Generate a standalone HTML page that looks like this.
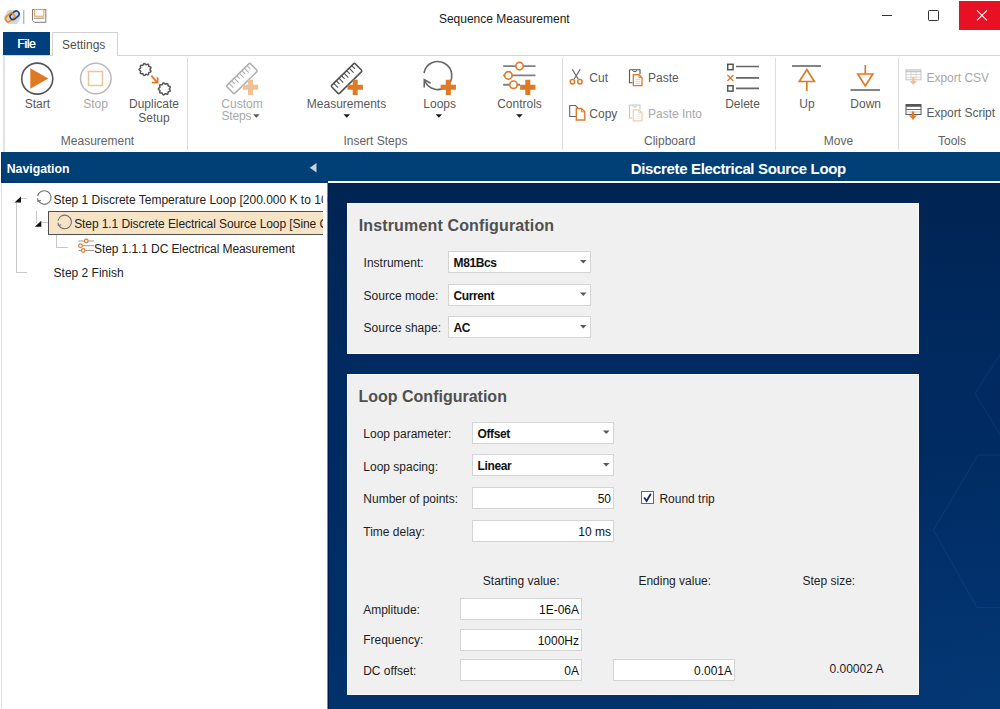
<!DOCTYPE html>
<html><head><meta charset="utf-8"><title>Sequence Measurement</title>
<style>
html,body{margin:0;padding:0;}
body{width:1000px;height:709px;position:relative;overflow:hidden;background:#fff;font-family:"Liberation Sans", sans-serif;}
.t{position:absolute;white-space:nowrap;font-family:"Liberation Sans", sans-serif;}
</style></head><body>
<div class="t" style="left:438.9px;top:12.64px;font-size:12px;line-height:12px;color:#1a1a1a;">Sequence Measurement</div>
<div style="position:absolute;left:3px;top:55px;width:997px;height:1px;background:#d6d6d6;"></div>
<div style="position:absolute;left:3px;top:32px;width:47px;height:23px;background:#003f7e;"></div>
<div class="t" style="left:17.3px;top:38.44px;font-size:12px;line-height:12px;color:#fff;letter-spacing:-0.3px;text-shadow:0.3px 0 0 #fff;">File</div>
<div style="position:absolute;left:52px;top:32px;width:66px;height:24px;background:#fff;border:1px solid #d2d2d2;border-bottom:none;box-sizing:border-box;"></div>
<div class="t" style="left:62px;top:38.84px;font-size:12px;line-height:12px;color:#505050;">Settings</div>
<div style="position:absolute;left:3px;top:56px;width:2px;height:96px;background:#e2e2e2;"></div>
<div style="position:absolute;left:187px;top:58px;width:1px;height:92px;background:#dcdcdc;"></div>
<div style="position:absolute;left:562px;top:58px;width:1px;height:92px;background:#dcdcdc;"></div>
<div style="position:absolute;left:775px;top:58px;width:1px;height:92px;background:#dcdcdc;"></div>
<div style="position:absolute;left:898px;top:58px;width:1px;height:92px;background:#dcdcdc;"></div>
<div class="t" style="left:97.5px;top:135.24px;transform:translateX(-50%);font-size:12px;line-height:12px;color:#636363;">Measurement</div>
<div class="t" style="left:375.4px;top:135.24px;transform:translateX(-50%);font-size:12px;line-height:12px;color:#636363;">Insert Steps</div>
<div class="t" style="left:669.7px;top:135.24px;transform:translateX(-50%);font-size:12px;line-height:12px;color:#636363;">Clipboard</div>
<div class="t" style="left:838.4px;top:135.24px;transform:translateX(-50%);font-size:12px;line-height:12px;color:#636363;">Move</div>
<div class="t" style="left:952px;top:135.24px;transform:translateX(-50%);font-size:12px;line-height:12px;color:#636363;">Tools</div>
<div class="t" style="left:37.3px;top:97.84px;transform:translateX(-50%);font-size:12px;line-height:12px;color:#595959;">Start</div>
<div class="t" style="left:95.5px;top:97.84px;transform:translateX(-50%);font-size:12px;line-height:12px;color:#a8a8a8;">Stop</div>
<div class="t" style="left:154px;top:97.84px;transform:translateX(-50%);font-size:12px;line-height:12px;color:#595959;">Duplicate</div>
<div class="t" style="left:154px;top:111.54px;transform:translateX(-50%);font-size:12px;line-height:12px;color:#595959;">Setup</div>
<div class="t" style="left:242px;top:97.84px;transform:translateX(-50%);font-size:12px;line-height:12px;color:#a8a8a8;">Custom</div>
<div class="t" style="left:221.5px;top:110.04px;font-size:12px;line-height:12px;color:#a8a8a8;letter-spacing:-0.2px;">Steps</div>
<div class="t" style="left:346.5px;top:97.84px;transform:translateX(-50%);font-size:12px;line-height:12px;color:#595959;">Measurements</div>
<div class="t" style="left:439.7px;top:97.84px;transform:translateX(-50%);font-size:12px;line-height:12px;color:#595959;">Loops</div>
<div class="t" style="left:519.5px;top:97.84px;transform:translateX(-50%);font-size:12px;line-height:12px;color:#595959;">Controls</div>
<div class="t" style="left:589.3px;top:72.44px;font-size:12px;line-height:12px;color:#595959;">Cut</div>
<div class="t" style="left:648px;top:72.44px;font-size:12px;line-height:12px;color:#595959;">Paste</div>
<div class="t" style="left:589.3px;top:107.64px;font-size:12px;line-height:12px;color:#595959;">Copy</div>
<div class="t" style="left:648px;top:107.64px;font-size:12px;line-height:12px;color:#a8a8a8;">Paste Into</div>
<div class="t" style="left:742.5px;top:97.84px;transform:translateX(-50%);font-size:12px;line-height:12px;color:#595959;">Delete</div>
<div class="t" style="left:807px;top:97.84px;transform:translateX(-50%);font-size:12px;line-height:12px;color:#595959;">Up</div>
<div class="t" style="left:865.7px;top:97.84px;transform:translateX(-50%);font-size:12px;line-height:12px;color:#595959;">Down</div>
<div class="t" style="left:926.4px;top:72.44px;font-size:12px;line-height:12px;color:#a8a8a8;">Export CSV</div>
<div class="t" style="left:926.4px;top:107.04px;font-size:12px;line-height:12px;color:#595959;">Export Script</div>
<div style="position:absolute;left:1px;top:152px;width:327px;height:31px;background:#004077;"></div>
<div style="position:absolute;left:1px;top:152px;width:1px;height:31px;background:#003466;"></div>
<div style="position:absolute;left:1px;top:181px;width:327px;height:2px;background:#00386c;"></div>
<div class="t" style="left:6.7px;top:162.69px;font-size:12.3px;line-height:12.3px;color:#fff;font-weight:700;">Navigation</div>
<div style="position:absolute;left:0px;top:183px;width:327px;height:526px;background:#fff;"></div>
<div style="position:absolute;left:1px;top:183px;width:1px;height:526px;background:#e0e0e0;"></div>
<div style="position:absolute;left:328px;top:152px;width:672px;height:29px;background:#004077;"></div>
<div style="position:absolute;left:328px;top:181px;width:672px;height:2px;background:#ffffff;"></div>
<div class="t" style="left:738.3px;top:160.70px;transform:translateX(-50%);font-size:15px;line-height:15px;color:#fff;font-weight:700;letter-spacing:-0.35px;">Discrete Electrical Source Loop</div>
<div style="position:absolute;left:327px;top:183px;width:673px;height:526px;background:radial-gradient(ellipse 380px 260px at 100% 100%, rgba(12,70,140,0.3), rgba(12,70,140,0) 100%),linear-gradient(180deg,#002452 0%,#002a60 35%,#002d65 70%,#00326b 100%);"></div>
<div style="position:absolute;left:327px;top:183px;width:1px;height:526px;background:#7c8aa2;"></div>
<div style="position:absolute;left:328px;top:183px;width:1px;height:526px;background:#001b4e;"></div>
<div style="position:absolute;left:21px;top:198px;width:6px;height:1px;background:#c8c8c8;"></div>
<div style="position:absolute;left:16px;top:203px;width:1px;height:70px;background:#c8c8c8;"></div>
<div style="position:absolute;left:16px;top:272px;width:11px;height:1px;background:#c8c8c8;"></div>
<div class="t" style="left:53.6px;top:193.84px;font-size:12px;line-height:12px;color:#222;">Step 1 Discrete Temperature Loop [200.000 K to 10</div>
<div style="position:absolute;left:36px;top:211px;width:1px;height:12px;background:#c8c8c8;"></div>
<div style="position:absolute;left:42px;top:222px;width:6px;height:1px;background:#c8c8c8;"></div>
<div style="position:absolute;left:48px;top:211px;width:276px;height:24px;background:#f7e4c6;border-top:1px solid #505050;border-bottom:1px solid #505050;border-left:1px solid #505050;box-sizing:border-box;"></div>
<div style="position:absolute;left:48px;top:205px;width:275px;height:30px;overflow:hidden">
<div class="t" style="left:26.2px;top:12.74px;font-size:12px;line-height:12px;color:#222;letter-spacing:-0.09px;">Step 1.1 Discrete Electrical Source Loop [Sine Cu</div>
</div>
<div style="position:absolute;left:56px;top:235px;width:1px;height:13px;background:#c8c8c8;"></div>
<div style="position:absolute;left:56px;top:247px;width:12px;height:1px;background:#c8c8c8;"></div>
<div class="t" style="left:94px;top:242.54px;font-size:12px;line-height:12px;color:#222;letter-spacing:-0.09px;">Step 1.1.1 DC Electrical Measurement</div>
<div class="t" style="left:53.6px;top:266.54px;font-size:12px;line-height:12px;color:#222;">Step 2 Finish</div>
<div style="position:absolute;left:323px;top:183px;width:4px;height:100px;background:#fff;"></div>
<div style="position:absolute;left:347px;top:203px;width:572px;height:151px;background:#f0f0f0;border:1px solid #fbfbfb;box-sizing:border-box;"></div>
<div style="position:absolute;left:347px;top:374px;width:572px;height:321px;background:#f0f0f0;border:1px solid #fbfbfb;box-sizing:border-box;"></div>
<div class="t" style="left:358.7px;top:217.96px;font-size:16px;line-height:16px;color:#505050;font-weight:700;letter-spacing:0.15px;">Instrument Configuration</div>
<div class="t" style="left:358.5px;top:388.66px;font-size:16px;line-height:16px;color:#505050;font-weight:700;">Loop Configuration</div>
<div class="t" style="left:363.6px;top:257.04px;font-size:12px;line-height:12px;color:#1e1e1e;">Instrument:</div>
<div class="t" style="left:363.6px;top:289.54px;font-size:12px;line-height:12px;color:#1e1e1e;">Source mode:</div>
<div class="t" style="left:363.6px;top:322.04px;font-size:12px;line-height:12px;color:#1e1e1e;">Source shape:</div>
<div style="position:absolute;left:448px;top:251px;width:143px;height:22px;background:#fff;border:1px solid #d4d4d4;box-sizing:border-box;"></div>
<div class="t" style="left:453.6px;top:257.04px;font-size:12px;line-height:12px;color:#111;font-weight:700;letter-spacing:-0.4px;">M81Bcs</div>
<div style="position:absolute;left:448px;top:283.5px;width:143px;height:22px;background:#fff;border:1px solid #d4d4d4;box-sizing:border-box;"></div>
<div class="t" style="left:453.6px;top:289.54px;font-size:12px;line-height:12px;color:#111;font-weight:700;letter-spacing:-0.4px;">Current</div>
<div style="position:absolute;left:448px;top:316px;width:143px;height:22px;background:#fff;border:1px solid #d4d4d4;box-sizing:border-box;"></div>
<div class="t" style="left:453.6px;top:322.04px;font-size:12px;line-height:12px;color:#111;font-weight:700;letter-spacing:-0.4px;">AC</div>
<div class="t" style="left:363.3px;top:428.04px;font-size:12px;line-height:12px;color:#1e1e1e;">Loop parameter:</div>
<div class="t" style="left:363.3px;top:460.54px;font-size:12px;line-height:12px;color:#1e1e1e;">Loop spacing:</div>
<div class="t" style="left:363.3px;top:493.04px;font-size:12px;line-height:12px;color:#1e1e1e;">Number of points:</div>
<div class="t" style="left:363.3px;top:525.54px;font-size:12px;line-height:12px;color:#1e1e1e;">Time delay:</div>
<div style="position:absolute;left:472px;top:421.5px;width:142px;height:22px;background:#fff;border:1px solid #d4d4d4;box-sizing:border-box;"></div>
<div class="t" style="left:477.6px;top:427.54px;font-size:12px;line-height:12px;color:#111;font-weight:700;letter-spacing:-0.4px;">Offset</div>
<div style="position:absolute;left:472px;top:454px;width:142px;height:22px;background:#fff;border:1px solid #d4d4d4;box-sizing:border-box;"></div>
<div class="t" style="left:477.6px;top:460.04px;font-size:12px;line-height:12px;color:#111;font-weight:700;letter-spacing:-0.4px;">Linear</div>
<div style="position:absolute;left:472px;top:487px;width:142px;height:22px;background:#fff;border:1px solid #d4d4d4;box-sizing:border-box;"></div>
<div class="t" style="right:389px;top:493.04px;font-size:12px;line-height:12px;color:#111;">50</div>
<div style="position:absolute;left:472px;top:519.5px;width:142px;height:22px;background:#fff;border:1px solid #d4d4d4;box-sizing:border-box;"></div>
<div class="t" style="right:389px;top:525.54px;font-size:12px;line-height:12px;color:#111;">10 ms</div>
<div style="position:absolute;left:641px;top:491px;width:13px;height:13px;background:#fff;border:1px solid #6a6a6a;box-sizing:border-box;"></div>
<div class="t" style="left:659.4px;top:493.04px;font-size:12px;line-height:12px;color:#1e1e1e;">Round trip</div>
<div class="t" style="left:482.8px;top:575.24px;font-size:12px;line-height:12px;color:#1e1e1e;">Starting value:</div>
<div class="t" style="left:638.4px;top:575.24px;font-size:12px;line-height:12px;color:#1e1e1e;">Ending value:</div>
<div class="t" style="left:802.5px;top:575.24px;font-size:12px;line-height:12px;color:#1e1e1e;">Step size:</div>
<div class="t" style="left:363.2px;top:604.04px;font-size:12px;line-height:12px;color:#1e1e1e;">Amplitude:</div>
<div class="t" style="left:363.2px;top:634.34px;font-size:12px;line-height:12px;color:#1e1e1e;">Frequency:</div>
<div class="t" style="left:363.2px;top:665.34px;font-size:12px;line-height:12px;color:#1e1e1e;">DC offset:</div>
<div style="position:absolute;left:460px;top:598px;width:122px;height:22px;background:#fff;border:1px solid #d4d4d4;box-sizing:border-box;"></div>
<div class="t" style="right:421px;top:604.04px;font-size:12px;line-height:12px;color:#111;">1E-06A</div>
<div style="position:absolute;left:460px;top:628.5px;width:122px;height:22px;background:#fff;border:1px solid #d4d4d4;box-sizing:border-box;"></div>
<div class="t" style="right:421px;top:634.54px;font-size:12px;line-height:12px;color:#111;">1000Hz</div>
<div style="position:absolute;left:460px;top:659px;width:122px;height:22px;background:#fff;border:1px solid #d4d4d4;box-sizing:border-box;"></div>
<div class="t" style="right:421px;top:665.04px;font-size:12px;line-height:12px;color:#111;">0A</div>
<div style="position:absolute;left:613px;top:659px;width:122px;height:22px;background:#fff;border:1px solid #d4d4d4;box-sizing:border-box;"></div>
<div class="t" style="right:268px;top:665.04px;font-size:12px;line-height:12px;color:#111;">0.001A</div>
<div class="t" style="left:829.5px;top:663.24px;font-size:12px;line-height:12px;color:#1e1e1e;">0.00002 A</div>
<svg style="position:absolute;left:0;top:0;pointer-events:none" width="1000" height="709" viewBox="0 0 1000 709">
<polygon points="8,10 17,10 21,17 17,24 8,24 4,17" fill="#d6d6d6"/>
<g transform="translate(10 17.4) rotate(-40)"><rect x="-5" y="-2.9" width="10" height="5.8" rx="2.9" fill="none" stroke="#ef8a1e" stroke-width="1.6"/></g>
<g transform="translate(14.6 15.2) rotate(-40)"><rect x="-5" y="-2.9" width="10" height="5.8" rx="2.9" fill="none" stroke="#0d4a8a" stroke-width="1.6"/></g>
<g transform="translate(10 17.4) rotate(-40)"><path d="M2.1 -2.9 A2.9 2.9 0 0 1 5 0" fill="none" stroke="#ef8a1e" stroke-width="1.6"/></g>
<path d="M23.8 10 V24" stroke="#9a9a9a" stroke-width="1"/>
<path d="M32.5 9.5 H45.8 V22.3 H34.5 L32.5 20.3 Z" fill="#fff" stroke="#7a7a7a" stroke-width="1"/>
<rect x="34.6" y="9.6" width="9.2" height="6.6" fill="#fff" stroke="#e8a456" stroke-width="1.1"/>
<path d="M34 18.2 H44.3" stroke="#9aa0a8" stroke-width="1.3"/>
<path d="M882 15.5 H892" stroke="#333" stroke-width="1"/>
<rect x="928.5" y="10.5" width="10" height="10" fill="none" stroke="#333" stroke-width="1" rx="0.8"/>
<rect x="959" y="1" width="41" height="29" fill="#e81123"/>
<path d="M977 10.3 L987 20.3 M987 10.3 L977 20.3" stroke="#fff" stroke-width="1.1"/>
<circle cx="37.25" cy="78.65" r="15.5" fill="none" stroke="#555" stroke-width="1.6"/>
<polygon points="30.3,68.3 48.3,78.6 30.3,88.8" fill="#df7a24"/>
<circle cx="95.8" cy="78.5" r="15.3" fill="none" stroke="#b9b9b9" stroke-width="1.5"/>
<rect x="88.5" y="71.5" width="14" height="14" fill="none" stroke="#f0c297" stroke-width="1.5"/>
<polygon points="150.00,69.50 150.17,69.93 150.57,70.45 150.91,71.03 150.93,71.59 150.56,72.00 149.92,72.22 149.29,72.36 148.88,72.59 148.73,73.03 148.70,73.67 148.59,74.34 148.25,74.78 147.70,74.86 147.06,74.62 146.49,74.32 146.03,74.23 145.63,74.47 145.20,74.95 144.68,75.39 144.14,75.51 143.67,75.21 143.34,74.62 143.09,74.02 142.80,73.66 142.34,73.59 141.70,73.67 141.02,73.68 140.53,73.42 140.36,72.89 140.48,72.23 140.68,71.61 140.69,71.14 140.38,70.79 139.83,70.45 139.31,70.02 139.10,69.50 139.31,68.98 139.83,68.55 140.38,68.21 140.69,67.86 140.68,67.39 140.48,66.78 140.36,66.11 140.53,65.58 141.02,65.32 141.70,65.33 142.34,65.41 142.80,65.34 143.09,64.98 143.34,64.38 143.67,63.79 144.14,63.49 144.68,63.61 145.20,64.05 145.63,64.53 146.03,64.77 146.49,64.68 147.06,64.38 147.70,64.14 148.25,64.22 148.59,64.66 148.70,65.33 148.73,65.97 148.88,66.41 149.29,66.64 149.92,66.78 150.56,67.00 150.93,67.41 150.91,67.97 150.57,68.55 150.17,69.07" fill="none" stroke="#555" stroke-width="1.5" stroke-linejoin="round"/>
<polygon points="169.30,88.90 169.47,89.33 169.87,89.85 170.21,90.43 170.23,90.99 169.86,91.40 169.22,91.62 168.59,91.76 168.18,91.99 168.03,92.43 168.00,93.07 167.89,93.74 167.55,94.18 167.00,94.26 166.36,94.02 165.79,93.72 165.33,93.63 164.93,93.87 164.50,94.35 163.98,94.79 163.44,94.91 162.97,94.61 162.64,94.02 162.39,93.42 162.10,93.06 161.64,92.99 161.00,93.07 160.32,93.08 159.83,92.82 159.66,92.29 159.78,91.63 159.98,91.01 159.99,90.54 159.68,90.19 159.13,89.85 158.61,89.42 158.40,88.90 158.61,88.38 159.13,87.95 159.68,87.61 159.99,87.26 159.98,86.79 159.78,86.18 159.66,85.51 159.83,84.98 160.32,84.72 161.00,84.73 161.64,84.81 162.10,84.74 162.39,84.38 162.64,83.78 162.97,83.19 163.44,82.89 163.98,83.01 164.50,83.45 164.93,83.93 165.33,84.17 165.79,84.08 166.36,83.78 167.00,83.54 167.55,83.62 167.89,84.06 168.00,84.73 168.03,85.37 168.18,85.81 168.59,86.04 169.22,86.18 169.86,86.40 170.23,86.81 170.21,87.37 169.87,87.95 169.47,88.47" fill="none" stroke="#555" stroke-width="1.5" stroke-linejoin="round"/>
<path d="M151.3 75.6 L157.4 82.6" stroke="#df7a24" stroke-width="1.8"/>
<path d="M151.8 82.6 H157.6 V77.3" fill="none" stroke="#df7a24" stroke-width="1.8"/>
<g transform="translate(241.9 78.5) rotate(-44.5)"><rect x="-16.5" y="-5.6" width="33" height="11.2" rx="1.3" fill="#fff" stroke="#b0b0b0" stroke-width="1.5"/><path d="M-12.50 -5.6 v6.2 M-8.90 -5.6 v4.6 M-5.30 -5.6 v6.2 M-1.70 -5.6 v4.6 M1.90 -5.6 v6.2 M5.50 -5.6 v4.6 M9.10 -5.6 v6.2 M12.70 -5.6 v4.6 " stroke="#b0b0b0" stroke-width="1.1"/></g>
<path d="M242.85 87.30 H258.15 M250.50 79.65 V94.95" stroke="#efc195" stroke-width="5"/>
<polygon points="253.2,114.3 259.7,114.3 256.45,117.8" fill="#5a5a5a"/>
<g transform="translate(346.6 78.5) rotate(-44.5)"><rect x="-16.5" y="-5.6" width="33" height="11.2" rx="1.3" fill="#fff" stroke="#505050" stroke-width="1.5"/><path d="M-12.50 -5.6 v6.2 M-8.90 -5.6 v4.6 M-5.30 -5.6 v6.2 M-1.70 -5.6 v4.6 M1.90 -5.6 v6.2 M5.50 -5.6 v4.6 M9.10 -5.6 v6.2 M12.70 -5.6 v4.6 " stroke="#505050" stroke-width="1.1"/></g>
<path d="M347.55 87.30 H362.85 M355.20 79.65 V94.95" stroke="#df7a24" stroke-width="5"/>
<polygon points="343.5,114.3 350.0,114.3 346.75,117.8" fill="#1a1a1a"/>
<path d="M424.6 80.3 A14 14 0 1 0 424.0 73.0" fill="none" stroke="#676767" stroke-width="1.6"/>
<path d="M424.2 87.4 L424.3 79.6 L430.6 83.3" fill="none" stroke="#676767" stroke-width="1.6"/>
<path d="M440.65 87.35 H455.95 M448.30 79.70 V95.00" stroke="#df7a24" stroke-width="5"/>
<polygon points="435.6,114.3 442.1,114.3 438.85,117.8" fill="#1a1a1a"/>
<path d="M503.2 66.1 H535.5 M503.2 75.4 H535.5 M503.2 84.7 H520" stroke="#808080" stroke-width="1.9"/>
<circle cx="519.5" cy="66.1" r="3.7" fill="#fff" stroke="#df7a24" stroke-width="1.7"/>
<circle cx="508.4" cy="75.4" r="3.7" fill="#fff" stroke="#df7a24" stroke-width="1.7"/>
<circle cx="513.5" cy="84.7" r="3.7" fill="#fff" stroke="#df7a24" stroke-width="1.7"/>
<path d="M520.15 87.35 H535.45 M527.80 79.70 V95.00" stroke="#df7a24" stroke-width="5"/>
<polygon points="516.2,114.3 522.7,114.3 519.45,117.8" fill="#1a1a1a"/>
<path d="M572.2 69.3 L578.3 79.3 M580.2 69.3 L574.1 79.3" stroke="#666" stroke-width="1.2"/>
<circle cx="572.4" cy="81.8" r="2.2" fill="#fff" stroke="#df7a24" stroke-width="1.5"/>
<circle cx="579.9" cy="81.8" r="2.2" fill="#fff" stroke="#df7a24" stroke-width="1.5"/>
<path d="M629.5 69.8 H640 V74.3 M632.5 82.8 H629.5 V69.8" fill="none" stroke="#555" stroke-width="1.1"/>
<path d="M632.5 70.1 L633.5 71.6 H636 L637 70.1" fill="none" stroke="#555" stroke-width="1"/>
<path d="M633.3 74.6 H639 L642 77.6 V85.6 H633.3 Z" fill="#fff" stroke="#df7a24" stroke-width="1.3"/>
<path d="M639 74.6 V77.6 H642" fill="none" stroke="#df7a24" stroke-width="0.9"/>
<path d="M635.3 79.3 H640 M635.3 81.3 H640 M635.3 83.3 H640" stroke="#d8c4b0" stroke-width="0.8"/>
<path d="M569.7 105.5 H575.5 L577.5 107.5 V116.5 H569.7 Z" fill="#fff" stroke="#666" stroke-width="1.1"/>
<path d="M576.3 108.5 H581.5 L584.8 111.8 V120 H576.3 Z" fill="#fff" stroke="#df7a24" stroke-width="1.4"/>
<path d="M581.5 108.5 V111.8 H584.8" fill="none" stroke="#df7a24" stroke-width="0.9"/>
<path d="M629.5 105.0 H640 V109.5 M632.5 118.0 H629.5 V105.0" fill="none" stroke="#c6c6c6" stroke-width="1.1"/>
<path d="M632.5 105.3 L633.5 106.8 H636 L637 105.3" fill="none" stroke="#c6c6c6" stroke-width="1"/>
<path d="M633.3 109.8 H639 L642 112.8 V120.8 H633.3 Z" fill="#fff" stroke="#f3cfac" stroke-width="1.3"/>
<path d="M639 109.8 V112.8 H642" fill="none" stroke="#f3cfac" stroke-width="0.9"/>
<path d="M635.3 114.5 H640 M635.3 116.5 H640 M635.3 118.5 H640" stroke="#eee" stroke-width="0.8"/>
<rect x="727.7" y="64.3" width="5.4" height="5.4" fill="none" stroke="#555" stroke-width="1.5"/>
<rect x="727.7" y="85.7" width="5.4" height="5.4" fill="none" stroke="#555" stroke-width="1.5"/>
<path d="M727.4 75 L733.4 81 M733.4 75 L727.4 81" stroke="#df7a24" stroke-width="1.3"/>
<path d="M736 66.5 H759 M736 77.8 H759 M736 88.3 H759" stroke="#666" stroke-width="1.7"/>
<path d="M792 66 H821" stroke="#666" stroke-width="1.6"/>
<polygon points="806.8,69.5 814.3,81.5 799.3,81.5" fill="none" stroke="#df7a24" stroke-width="1.7" stroke-linejoin="miter"/>
<path d="M806.8 81.5 V91" stroke="#df7a24" stroke-width="1.7"/>
<path d="M850.5 90 H880" stroke="#666" stroke-width="1.6"/>
<polygon points="865.3,86 872.8,74 857.8,74" fill="none" stroke="#df7a24" stroke-width="1.7"/>
<path d="M865.3 65 V74" stroke="#df7a24" stroke-width="1.7"/>
<rect x="906" y="69.8" width="15" height="10" fill="#fff" stroke="#c4c4c4" stroke-width="1"/>
<path d="M906 71.5 H921" stroke="#c4c4c4" stroke-width="1.6"/>
<path d="M906 74.5 H921 M906 77.3 H921 M911 70 V80 M916 70 V80" stroke="#cfcfcf" stroke-width="0.8"/>
<path d="M913.3 77 V82" stroke="#f1c08e" stroke-width="2.2"/><polygon points="909.6,81 917,81 913.3,85" fill="#f1c08e"/>
<rect x="906" y="104.5" width="15" height="10" fill="#fff" stroke="#555" stroke-width="1"/>
<path d="M906 105.8 H921" stroke="#555" stroke-width="2"/>
<path d="M906 109.5 H921" stroke="#666" stroke-width="1"/>
<path d="M906 112 H921" stroke="#bbb" stroke-width="0.8"/>
<path d="M913 111.5 V116.5" stroke="#df7a24" stroke-width="2.4"/><polygon points="909,115.5 917,115.5 913,120" fill="#df7a24"/>
<polygon points="316.5,163 316.5,172.5 309.8,167.8" fill="#c6d3e3"/>
<path d="M1001 353 L975 393.5 L1001 436 M1001 455 L978 455 L933.5 530 L977 607.5 L1001 607.5" fill="none" stroke="rgba(70,130,210,0.14)" stroke-width="1"/>
<polygon points="21.0,196.5 21.0,202.5 14.5,202.5" fill="#111"/>
<path d="M37.60 196.20 A6.8 6.8 0 1 1 38.20 200.60" fill="none" stroke="#707070" stroke-width="1.1"/>
<path d="M37.60 198.20 L38.00 201.20 L40.80 200.40" fill="none" stroke="#707070" stroke-width="1.1"/>
<polygon points="41.3,220.8 41.3,226.8 34.8,226.8" fill="#111"/>
<path d="M58.00 220.60 A6.8 6.8 0 1 1 58.60 225.00" fill="none" stroke="#707070" stroke-width="1.1"/>
<path d="M58.00 222.60 L58.40 225.60 L61.20 224.80" fill="none" stroke="#707070" stroke-width="1.1"/>
<path d="M78.5 241 H94 M78.5 245.7 H94 M78.5 250.5 H94" stroke="#9a9a9a" stroke-width="1"/>
<circle cx="86.3" cy="241" r="1.8" fill="#fff" stroke="#df7a24" stroke-width="1.2"/>
<circle cx="80.5" cy="245.7" r="1.8" fill="#fff" stroke="#df7a24" stroke-width="1.2"/>
<circle cx="83.2" cy="250.5" r="1.8" fill="#fff" stroke="#df7a24" stroke-width="1.2"/>
<polygon points="580,260 586.5,260 583.25,263.5" fill="#585858"/>
<polygon points="580,292.5 586.5,292.5 583.25,296.0" fill="#585858"/>
<polygon points="580,325 586.5,325 583.25,328.5" fill="#585858"/>
<polygon points="603,430.5 609.5,430.5 606.25,434.0" fill="#585858"/>
<polygon points="603,463 609.5,463 606.25,466.5" fill="#585858"/>
<path d="M644.2 497.6 L646.6 501 L650.8 493.8" fill="none" stroke="#0b2f6e" stroke-width="1.8"/>
</svg>
</body></html>
